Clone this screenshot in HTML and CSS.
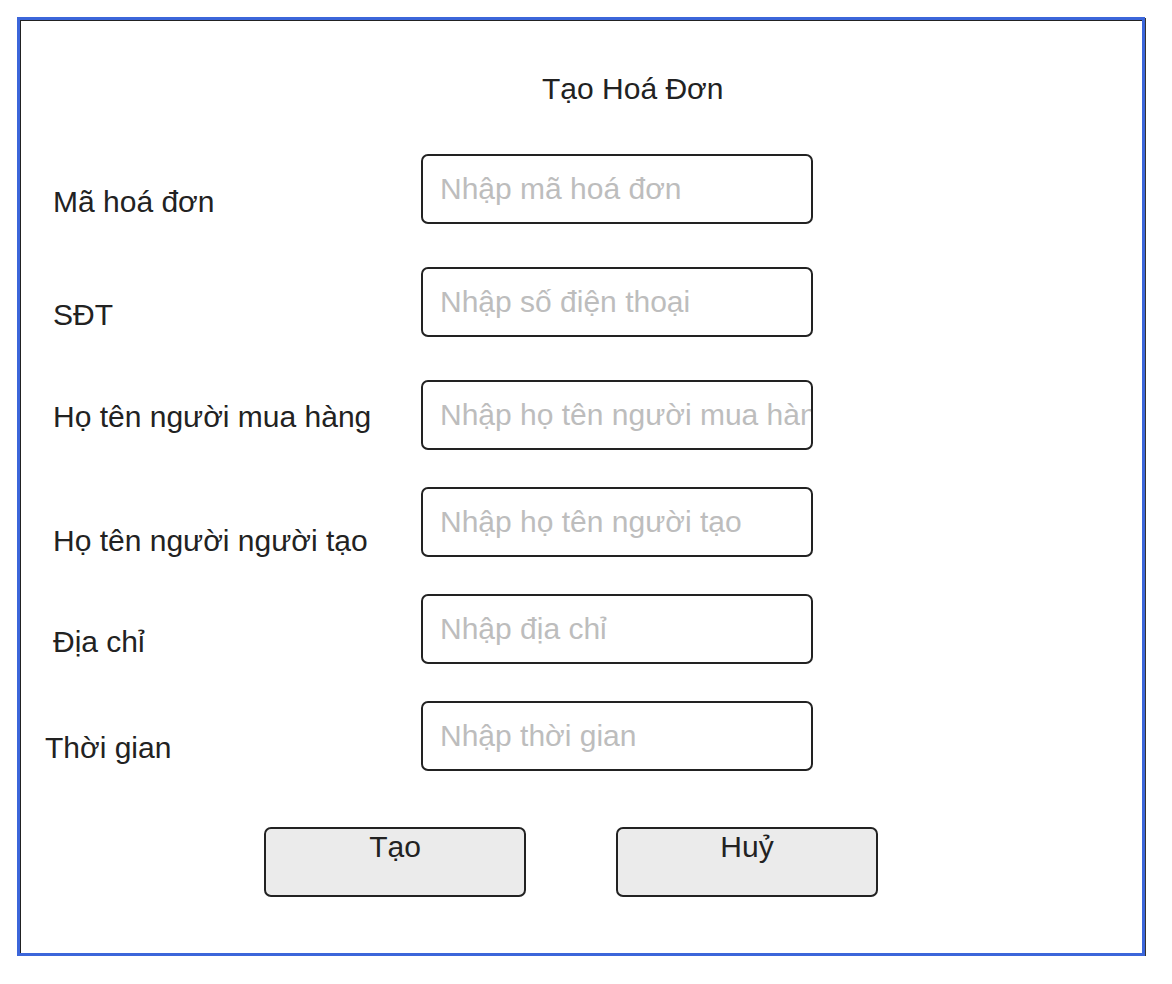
FILE: index.html
```html
<!DOCTYPE html>
<html lang="vi">
<head>
<meta charset="utf-8">
<title>Tạo Hoá Đơn</title>
<link rel="stylesheet" href="styles.css">
</head>
<body>
<div class="frame">
  <h1 class="title">Tạo Hoá Đơn</h1>
  <form class="form">
    <div class="row row-a">
      <label class="label">Mã hoá đơn</label>
      <input class="field" type="text" placeholder="Nhập mã hoá đơn">
    </div>
    <div class="row row-a">
      <label class="label">SĐT</label>
      <input class="field" type="text" placeholder="Nhập số điện thoại">
    </div>
    <div class="row row-b">
      <label class="label label-high">Họ tên người mua hàng</label>
      <input class="field" type="text" placeholder="Nhập họ tên người mua hàng">
    </div>
    <div class="row row-b">
      <label class="label label-low">Họ tên người người tạo</label>
      <input class="field" type="text" placeholder="Nhập họ tên người tạo">
    </div>
    <div class="row row-b">
      <label class="label">Địa chỉ</label>
      <input class="field" type="text" placeholder="Nhập địa chỉ">
    </div>
    <div class="row">
      <label class="label label-out">Thời gian</label>
      <input class="field" type="text" placeholder="Nhập thời gian">
    </div>
    <div class="actions">
      <button type="button" class="btn">Tạo</button>
      <button type="button" class="btn">Huỷ</button>
    </div>
  </form>
</div>
</body>
</html>
```
FILE: styles.css
```css
html, body {
  margin: 0;
  padding: 0;
  background: #ffffff;
}

body {
  font-family: "Liberation Sans", Arial, sans-serif;
  color: #222222;
}

.frame {
  box-sizing: border-box;
  margin: 17px 0 0 17px;
  width: 1128px;
  height: 939px;
  border: 3px solid #3c66da;
  box-shadow: inset 1px 1px 0 #222222, 1px 1px 0 #333333;
  padding: 52px 0 0 33px;
}

.title {
  margin: 0 0 48px 0;
  padding-left: 489px;
  font-size: 30px;
  font-weight: normal;
  line-height: 34px;
  color: #222222;
}

.form {
  display: flex;
  flex-direction: column;
}

.row {
  display: flex;
  height: 70px;
}

.row-a {
  margin-bottom: 43px;
}

.row-b {
  margin-bottom: 37px;
}

.label {
  box-sizing: border-box;
  width: 368px;
  padding-top: 31px;
  font-size: 30px;
  line-height: 34px;
  white-space: nowrap;
}

.label-high {
  padding-top: 20px;
}

.label-low {
  padding-top: 37px;
}

.label-out {
  width: 376px;
  margin-left: -8px;
  padding-top: 30px;
}

.field {
  box-sizing: border-box;
  width: 392px;
  height: 70px;
  margin: 0;
  border: 2px solid #222222;
  border-radius: 7px;
  padding: 0 0 0 17px;
  font-family: "Liberation Sans", Arial, sans-serif;
  font-size: 30px;
  color: #222222;
  background: #ffffff;
  outline: none;
}

.field::placeholder {
  color: #bdbdbd;
  opacity: 1;
}

.actions {
  display: flex;
  gap: 90px;
  margin: 56px 0 0 211px;
}

.btn {
  box-sizing: border-box;
  width: 262px;
  height: 70px;
  margin: 0;
  padding: 1px 0 0 0;
  border: 2px solid #222222;
  border-radius: 7px;
  background: #ebebeb;
  font-family: "Liberation Sans", Arial, sans-serif;
  font-size: 30px;
  line-height: 34px;
  color: #222222;
  display: flex;
  justify-content: center;
  align-items: flex-start;
}
```
